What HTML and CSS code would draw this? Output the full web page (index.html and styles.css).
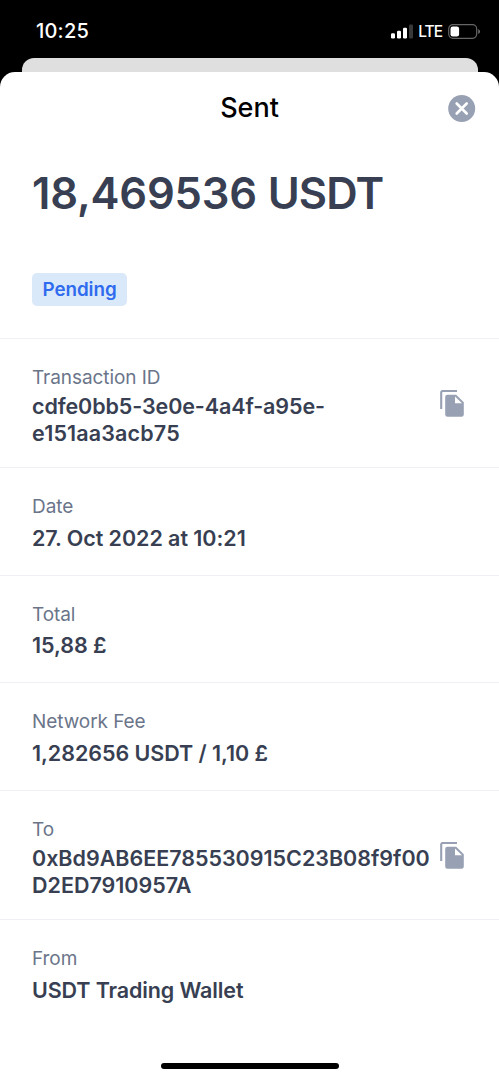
FILE: index.html
```html
<!DOCTYPE html>
<html lang="en">
<head>
<meta charset="utf-8">
<title>Sent</title>
<link rel="stylesheet" href="styles.css">
</head>
<body>
<svg width="0" height="0" class="defs"><symbol id="copy" viewBox="0 0 24 28"><path d="M1.200 19V2.600Q1.200 1 2.800 1H17" fill="none" stroke="#98a1b3" stroke-width="2.100"/><path d="M7.500 4.800h8.700L23.800 12.300V24.500a2.300 2.300 0 0 1-2.300 2.300H7.500A2.300 2.300 0 0 1 5.200 24.500V7.100A2.300 2.300 0 0 1 7.500 4.800z" fill="#98a1b3"/><path d="M15 6.500v6.800H22z" fill="#fff"/></symbol></svg>
<div class="status"><span class="time">10:25</span>
<svg class="signals" width="22" height="15" viewBox="0 0 22 15"><g fill="#fff"><rect y="9.300" width="4" height="5.200" rx="1.200"/><rect x="6" y="6.800" width="4" height="7.700" rx="1.200"/><rect x="12" y="3.700" width="4" height="10.800" rx="1.200"/></g><rect x="18" y=".5" width="4" height="14" rx="1.200" fill="#383838"/></svg>
<span class="lte">LTE</span>
<svg class="battery" width="33" height="15" viewBox="0 0 33 15"><rect x=".7" y=".7" width="28" height="13.600" rx="4.200" fill="none" stroke="#666" stroke-width="1.200"/><rect x="2.500" y="2.500" width="8.600" height="10" rx="2.200" fill="#fff"/><path d="M30.300 5q1.700 1 1.700 2.500T30.300 10z" fill="#777"/></svg>
</div>
<div class="behind"></div>
<main class="sheet">
<header class="head"><h1 class="title">Sent</h1><svg class="close" width="28" height="28" viewBox="0 0 28 28"><circle cx="13.700" cy="14.500" r="13.500" fill="#98a1b3"/><path d="M8.700 9.500l10 10M18.700 9.500l-10 10" stroke="#fff" stroke-width="2.600" stroke-linecap="round"/></svg></header>
<section class="summary"><div class="amount">18,469536 <span class="unit">USDT</span></div><span class="pill">Pending</span></section>
<section class="row tall"><div class="label">Transaction ID</div><div class="value"><span class="id1">cdfe0bb5-3e0e-4a4f-a95e-</span><br><span class="id2">e151aa3acb75</span></div><svg class="copy"><use href="#copy"/></svg></section>
<section class="row"><div class="label">Date</div><div class="value">27. Oct 2022 at 10:21</div></section>
<section class="row"><div class="label">Total</div><div class="value">15,88 £</div></section>
<section class="row"><div class="label">Network Fee</div><div class="value">1,282656 USDT / 1,10 £</div></section>
<section class="row tall"><div class="label">To</div><div class="value address">0xBd9AB6EE785530915C23B08f9f00<br>D2ED7910957A</div><svg class="copy"><use href="#copy"/></svg></section>
<section class="row last"><div class="label">From</div><div class="value wallet">USDT Trading Wallet</div></section>
<div class="home"></div>
</main>
</body>
</html>
```

FILE: styles.css
```css
*{box-sizing:border-box}
body{margin:0;background:#000;font-family:Inter,sans-serif;height:1080px;overflow:hidden;color:#383f52}
.defs{position:absolute}
.status{height:58px;display:flex;align-items:center;color:#fff;padding:4px 18px 0 36px}
.time{font-size:20px;font-weight:500;letter-spacing:.2px;margin-right:auto}
.lte{font-size:15.500px;font-weight:500;letter-spacing:-1px;margin:0 6px 0 5px}
.behind{height:14px;margin:0 21.500px;background:#dfdfdf;border-radius:12px 12px 0 0}
.sheet{height:1008px;background:#fff;border-radius:15px 15px 0 0;display:flex;flex-direction:column}
.head{height:72px;display:grid;grid-template-columns:1fr auto 1fr;align-items:center;padding-right:23px}
.title{grid-column:2;margin:0;padding-left:23px;color:#000;font-size:27px;font-weight:500;line-height:72px}
.close{justify-self:end}
.summary{height:195px;padding:21px 32px 0;border-bottom:1px solid #f0f0f5}
.amount{font-size:43.500px;line-height:56px;font-weight:600;letter-spacing:-.2px;white-space:nowrap}
.unit{letter-spacing:-.85px}
.pill{display:inline-block;margin-top:52px;height:33px;padding:0 10.500px;border-radius:5px;background:#dae9f9;color:#2f6bee;font-size:18.800px;font-weight:600;letter-spacing:-.05px;line-height:33px}
.row{height:107.700px;padding:26px 32px 0;border-bottom:1px solid #f0f0f4;position:relative}
.label{font-size:19px;line-height:26px;letter-spacing:-.07px;color:#6b758a}
.value{font-size:21.500px;line-height:27px;font-weight:600;letter-spacing:-.05px;margin-top:4.800px;white-space:nowrap}
.tall{height:129px}
.tall .value{margin-top:2px}
.id1{letter-spacing:-.1px}
.id2{letter-spacing:.15px}
.address{letter-spacing:-.02px}
.wallet{letter-spacing:-.12px}
.copy{position:absolute;left:440px;top:51px;width:24px;height:28px}
.last{border:0}
.home{width:178px;height:6px;border-radius:3px;background:#000;margin:35px auto 0}
```
